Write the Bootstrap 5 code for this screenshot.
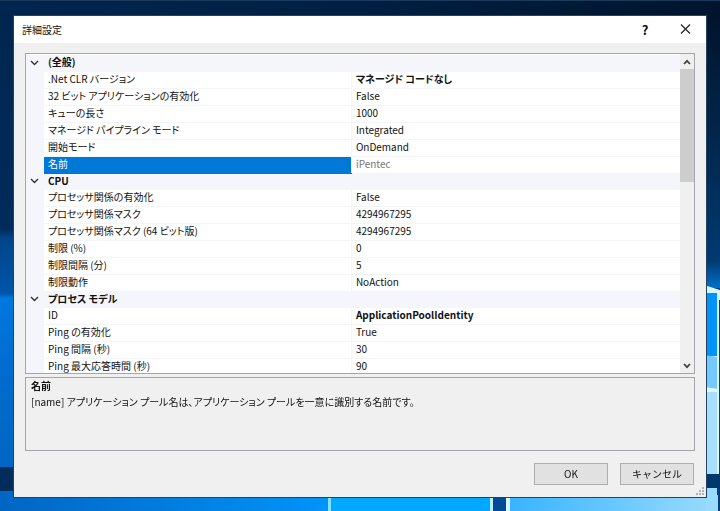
<!DOCTYPE html>
<html lang="ja">
<head>
<meta charset="utf-8">
<meta name="viewport" content="width=device-width, initial-scale=1">
<title>詳細設定</title>
<link rel="stylesheet" href="https://cdn.jsdelivr.net/npm/bootstrap@5.3.0/dist/css/bootstrap.min.css">
<style>
body{font-family:"Noto Sans CJK JP",sans-serif;font-feature-settings:"palt";font-size:10px;line-height:16px;color:#111;background:#001f42;padding:16px 14px 14px}
.wallpaper{z-index:-1}
.dialog{background:#f0f0f0;outline:1px solid #24435f}
.titlebar{height:27px;background:#fff;padding:0 1px 0 8px}
.titlebar h1{font-size:10px;line-height:26px}
.cap{width:40px;height:27px;font-size:13px;font-weight:600;line-height:24px;color:#111}
.flat{border:0;background:none;padding:0;color:inherit}
.content{padding:10px 11px 12px}
.grid-box{border:1px solid #a3a6ab;background:#fff;flex:1 1 0;min-height:120px;padding-top:1px}
.props{table-layout:fixed;width:100%}
.col-gutter{width:18px}
.col-name{width:47%}
.props td,.props th{height:17px;line-height:14px;padding:0 4px 2px;white-space:nowrap;overflow:hidden;border-bottom:1px solid #f3f5f8;font-weight:400}
.props td+td,.props th+td{border-left:1px solid #f3f5f8}
.props .gutter{background:#f5f6fb;padding:0;border-color:#f5f6fb}
.props .group th,.props .group td{height:16px;line-height:13px;background:#f4f6fc;font-weight:700;border-color:#f4f6fc}
.props .sel th{background:#0078d7;color:#fff;border-color:#0078d7}
.props .sel td:last-child{color:#777}
.props .changed{font-weight:700}
.toggle{width:17px;height:15px}
.sbar{width:14px;background:#f0f0f0;margin-top:-1px}
.sbar button{height:15px}
.thumb{height:113px;background:#cdcdcd}
.desc{border:1px solid #a3a6ab;min-height:74px;margin-top:3px;padding:0 5px}
.desc h2{font-size:10px;line-height:16px}
.actions{margin-top:12px;gap:12px;padding-right:1px}
.cmd{width:74px;height:22px;padding:0;border:1px solid #adadad;border-radius:0;background:#e1e1e1;color:#111;font-size:10px;line-height:20px}
.grip{right:1px;bottom:1px}
</style>
<script src="https://cdn.jsdelivr.net/npm/bootstrap@5.3.0/dist/js/bootstrap.bundle.min.js"></script>
</head>
<body class="d-flex flex-column min-vh-100">
<svg class="wallpaper position-fixed top-0 start-0 w-100 h-100" viewBox="0 0 720 511" preserveAspectRatio="none" aria-hidden="true">
<defs>
<linearGradient id="top"><stop offset="0" stop-color="#00264f"/><stop offset=".5" stop-color="#001f42"/><stop offset="1" stop-color="#00152d"/></linearGradient>
<linearGradient id="left" x2="0" y2="1"><stop offset="0" stop-color="#00264f"/><stop offset=".43" stop-color="#002b5b"/><stop offset=".45" stop-color="#00458a"/><stop offset=".56" stop-color="#0055a8"/><stop offset=".57" stop-color="#0078e0"/><stop offset=".7" stop-color="#006cd0"/><stop offset="1" stop-color="#0064bd"/></linearGradient>
<linearGradient id="right" x2="0" y2="1"><stop offset="0" stop-color="#00152d"/><stop offset=".5" stop-color="#00294f"/><stop offset=".9" stop-color="#003a72"/><stop offset="1" stop-color="#0070c8"/></linearGradient>
<linearGradient id="bottom"><stop offset="0" stop-color="#0066c4"/><stop offset="1" stop-color="#0094fa"/></linearGradient>
<linearGradient id="pane"><stop offset="0" stop-color="#38b4ff"/><stop offset="1" stop-color="#9adcff"/></linearGradient>
</defs>
<path fill="url(#top)" d="M0 0h720v20H0z"/>
<path fill="#1c3a5c" d="M0 0h720v1H0z"/>
<path fill="url(#left)" d="M0 16h16v495H0z"/>
<path fill="#002d5c" d="M0 467h16v24H0z"/>
<path fill="url(#right)" d="M704 16h16v272h-16z"/>
<path fill="#003f7c" d="M704 288h16v223h-16z"/>
<path fill="#d8f7ff" d="M704 285l16 5v10h-1v174h-15z"/>
<path fill="#0094fb" d="M704 293h13v63h-13z"/>
<path fill="#74c9ff" d="M704 355l13 2v32l-13-2z"/>
<path fill="#e2f8ff" d="M704 387l13 2v4h-13z"/>
<path fill="#a8deff" d="M704 392h13v82h-13z"/>
<path fill="#00386e" d="M704 474h16v14h-16z"/>
<path fill="url(#bottom)" d="M0 491h330v20H0z"/>
<path fill="#00a8ff" d="M330 495h162v16H330z"/>
<path fill="#7ee4ff" d="M328 495h3v16h-3z"/>
<path fill="#b5f0ff" d="M490 495h3v16h-3z"/>
<path fill="#004a98" d="M493 495h13v16h-13z"/>
<path fill="#d8f7ff" d="M506 495h4v16h-4z"/>
<path fill="url(#pane)" d="M510 495h208v16H510z"/>
<path fill="#9adcff" d="M706 488h11v23h-11z"/>
</svg>

<main class="dialog position-relative d-flex flex-column flex-grow-1" role="dialog" aria-labelledby="dialog-title">
<header class="titlebar d-flex align-items-center">
<h1 id="dialog-title" class="mb-0 me-auto fw-normal">詳細設定</h1>
<button type="button" class="flat cap" aria-label="ヘルプ">?</button>
<button type="button" class="flat cap d-flex align-items-center justify-content-center" aria-label="閉じる"><svg width="11" height="11" viewBox="0 0 11 11" fill="none" stroke="#222" stroke-width="1.2"><path d="M1 .5l9 9M10 .5l-9 9"/></svg></button>
</header>
<div class="content d-flex flex-column flex-grow-1">
<section class="grid-box d-flex overflow-hidden">
<div class="flex-grow-1 overflow-hidden">
<table class="props">
<colgroup><col class="col-gutter"><col class="col-name"><col></colgroup>
<tbody>
<tr class="group"><td class="gutter"><button type="button" class="flat toggle d-flex align-items-center justify-content-center" aria-label="折りたたむ"><svg width="9" height="6" viewBox="0 0 9 6" fill="none" stroke="#333" stroke-width="1.4"><path d="M1 1l3.500 3.500L8 1"/></svg></button></td><th colspan="2">(全般)</th></tr>
<tr><td class="gutter"></td><th scope="row">.Net CLR バージョン</th><td class="changed">マネージド コードなし</td></tr>
<tr><td class="gutter"></td><th scope="row">32 ビット アプリケーションの有効化</th><td>False</td></tr>
<tr><td class="gutter"></td><th scope="row">キューの長さ</th><td>1000</td></tr>
<tr><td class="gutter"></td><th scope="row">マネージド パイプライン モード</th><td>Integrated</td></tr>
<tr><td class="gutter"></td><th scope="row">開始モード</th><td>OnDemand</td></tr>
<tr class="sel"><td class="gutter"></td><th scope="row">名前</th><td>iPentec</td></tr>
<tr class="group"><td class="gutter"><button type="button" class="flat toggle d-flex align-items-center justify-content-center" aria-label="折りたたむ"><svg width="9" height="6" viewBox="0 0 9 6" fill="none" stroke="#333" stroke-width="1.4"><path d="M1 1l3.500 3.500L8 1"/></svg></button></td><th colspan="2">CPU</th></tr>
<tr><td class="gutter"></td><th scope="row">プロセッサ関係の有効化</th><td>False</td></tr>
<tr><td class="gutter"></td><th scope="row">プロセッサ関係マスク</th><td>4294967295</td></tr>
<tr><td class="gutter"></td><th scope="row">プロセッサ関係マスク (64 ビット版)</th><td>4294967295</td></tr>
<tr><td class="gutter"></td><th scope="row">制限 (%)</th><td>0</td></tr>
<tr><td class="gutter"></td><th scope="row">制限間隔 (分)</th><td>5</td></tr>
<tr><td class="gutter"></td><th scope="row">制限動作</th><td>NoAction</td></tr>
<tr class="group"><td class="gutter"><button type="button" class="flat toggle d-flex align-items-center justify-content-center" aria-label="折りたたむ"><svg width="9" height="6" viewBox="0 0 9 6" fill="none" stroke="#333" stroke-width="1.4"><path d="M1 1l3.500 3.500L8 1"/></svg></button></td><th colspan="2">プロセス モデル</th></tr>
<tr><td class="gutter"></td><th scope="row">ID</th><td class="changed">ApplicationPoolIdentity</td></tr>
<tr><td class="gutter"></td><th scope="row">Ping の有効化</th><td>True</td></tr>
<tr><td class="gutter"></td><th scope="row">Ping 間隔 (秒)</th><td>30</td></tr>
<tr><td class="gutter"></td><th scope="row">Ping 最大応答時間 (秒)</th><td>90</td></tr>
</tbody>
</table>
</div>
<div class="sbar d-flex flex-column flex-shrink-0">
<button type="button" class="flat d-flex align-items-center justify-content-center" aria-label="上へ"><svg width="8" height="6" viewBox="0 0 8 6" fill="none" stroke="#444" stroke-width="1.8"><path d="M1 5l3-3.200L7 5"/></svg></button>
<div class="thumb"></div>
<button type="button" class="flat d-flex align-items-center justify-content-center mt-auto" aria-label="下へ"><svg width="8" height="6" viewBox="0 0 8 6" fill="none" stroke="#444" stroke-width="1.8"><path d="M1 1l3 3.200L7 1"/></svg></button>
</div>
</section>
<section class="desc">
<h2 class="mb-0 fw-bold">名前</h2>
<p class="mb-0">[name] アプリケーション プール名は、アプリケーション プールを一意に識別する名前です。</p>
</section>
<div class="actions d-flex justify-content-end">
<button type="button" class="btn cmd">OK</button>
<button type="button" class="btn cmd">キャンセル</button>
</div>
</div>
<svg class="grip position-absolute" width="9" height="9" viewBox="0 0 9 9" fill="#b4b4b4" aria-hidden="true"><path d="M6 0h2v2H6zM3 3h2v2H3zM6 3h2v2H6zM0 6h2v2H0zM3 6h2v2H3zM6 6h2v2H6z"/></svg>
</main>
</body>
</html>
